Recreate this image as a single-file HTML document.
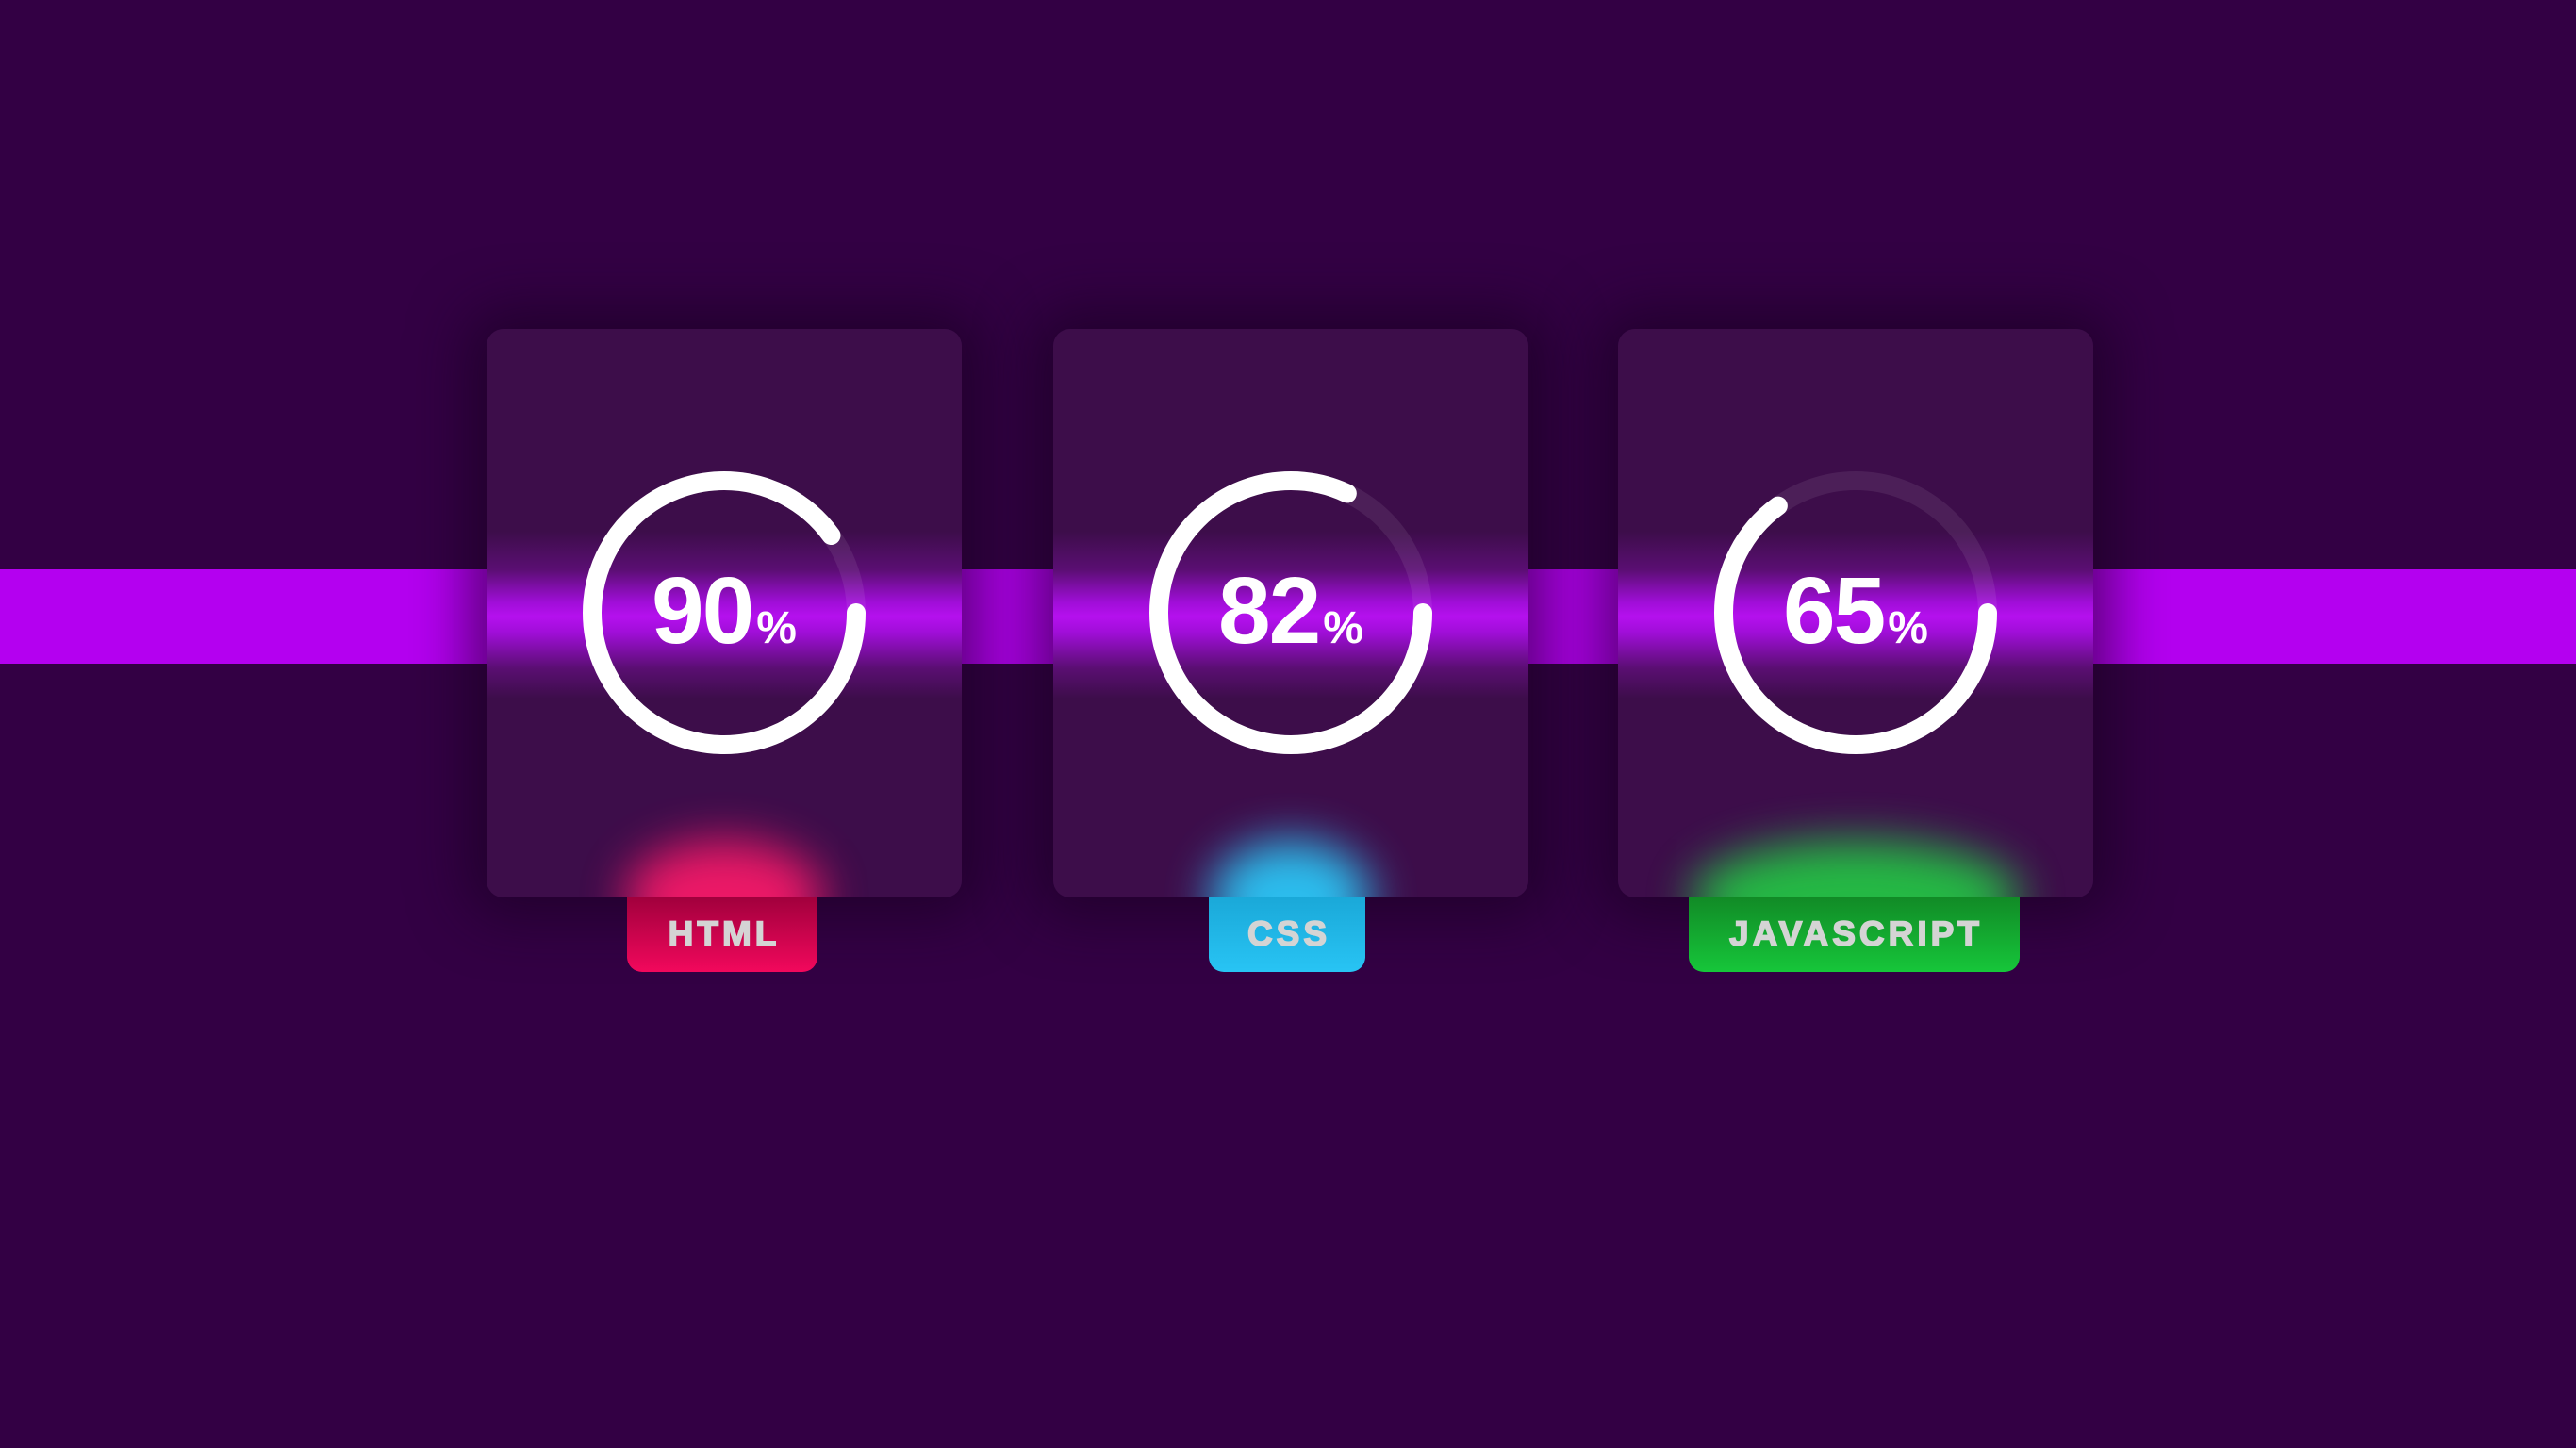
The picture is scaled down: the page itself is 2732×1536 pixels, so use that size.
<!DOCTYPE html>
<html><head><meta charset="utf-8"><style>
html,body{margin:0;padding:0}
body{width:2732px;height:1536px;background:#330044;position:relative;overflow:hidden;font-family:"Liberation Sans",Arial,sans-serif}
.bar{position:absolute;left:0;top:604px;width:2732px;height:100px;background:#b400f0}
.card{position:absolute;top:349px;width:504px;height:603px;border-radius:18px;overflow:hidden;
background:linear-gradient(to bottom,#3d0d4a 0px,#3d0d4a 215px,#5a0e72 255px,#a00ed8 290px,#b510ee 305px,#a00ed8 322px,#5a0e72 360px,#3d0d4a 392px,#3d0d4a 100%);
box-shadow:0 0 60px 20px rgba(20,0,28,.55)}
.glow{position:absolute;bottom:-60px;left:50%;height:120px;transform:translateX(-50%);filter:blur(24px);border-radius:50%;opacity:.9}
.ring{position:absolute;left:102px;top:151px}
.pct{position:absolute;left:0;width:504px;top:242px;text-align:center;color:#fff;font-weight:bold;white-space:nowrap}
.pct b{font-size:100px;letter-spacing:-2px}
.pct i{font-style:normal;font-size:48px;margin-left:4px}
.badge{position:absolute;top:951px;height:80px;border-radius:0 0 16px 16px;display:flex;align-items:center;justify-content:center;
font-weight:bold;font-size:37px;letter-spacing:4px;color:#d4d4d4;-webkit-text-stroke:1.6px #d4d4d4;padding-left:4px;box-sizing:border-box}
</style></head><body>
<div class="bar"></div>

<div class="card" style="left:516px">
  <div class="glow" style="width:210px;background:#ff1a6a"></div>
  <svg class="ring" width="300" height="300" viewBox="0 0 300 300"><circle cx="150" cy="150" r="140" fill="none" stroke="rgba(255,255,255,.08)" stroke-width="20"/><circle cx="150" cy="150" r="140" fill="none" stroke="#fff" stroke-width="20" stroke-linecap="round" stroke-dasharray="791.7 879.6"/></svg>
  <div class="pct"><b>90</b><i>%</i></div>
</div>
<div class="badge" style="left:665px;width:202px;background:linear-gradient(#a0003c,#f2085c)">HTML</div>

<div class="card" style="left:1117px">
  <div class="glow" style="width:170px;background:#2ad0ff"></div>
  <svg class="ring" width="300" height="300" viewBox="0 0 300 300"><circle cx="150" cy="150" r="140" fill="none" stroke="rgba(255,255,255,.08)" stroke-width="20"/><circle cx="150" cy="150" r="140" fill="none" stroke="#fff" stroke-width="20" stroke-linecap="round" stroke-dasharray="721.3 879.6"/></svg>
  <div class="pct"><b>82</b><i>%</i></div>
</div>
<div class="badge" style="left:1282px;width:166px;background:linear-gradient(#1aa8d8,#28c4f4)">CSS</div>

<div class="card" style="left:1716px">
  <div class="glow" style="width:350px;background:#22cc44"></div>
  <svg class="ring" width="300" height="300" viewBox="0 0 300 300"><circle cx="150" cy="150" r="140" fill="none" stroke="rgba(255,255,255,.08)" stroke-width="20"/><circle cx="150" cy="150" r="140" fill="none" stroke="#fff" stroke-width="20" stroke-linecap="round" stroke-dasharray="571.7 879.6"/></svg>
  <div class="pct"><b>65</b><i>%</i></div>
</div>
<div class="badge" style="left:1791px;width:351px;background:linear-gradient(#118a26,#16c63a)">JAVASCRIPT</div>
</body></html>
